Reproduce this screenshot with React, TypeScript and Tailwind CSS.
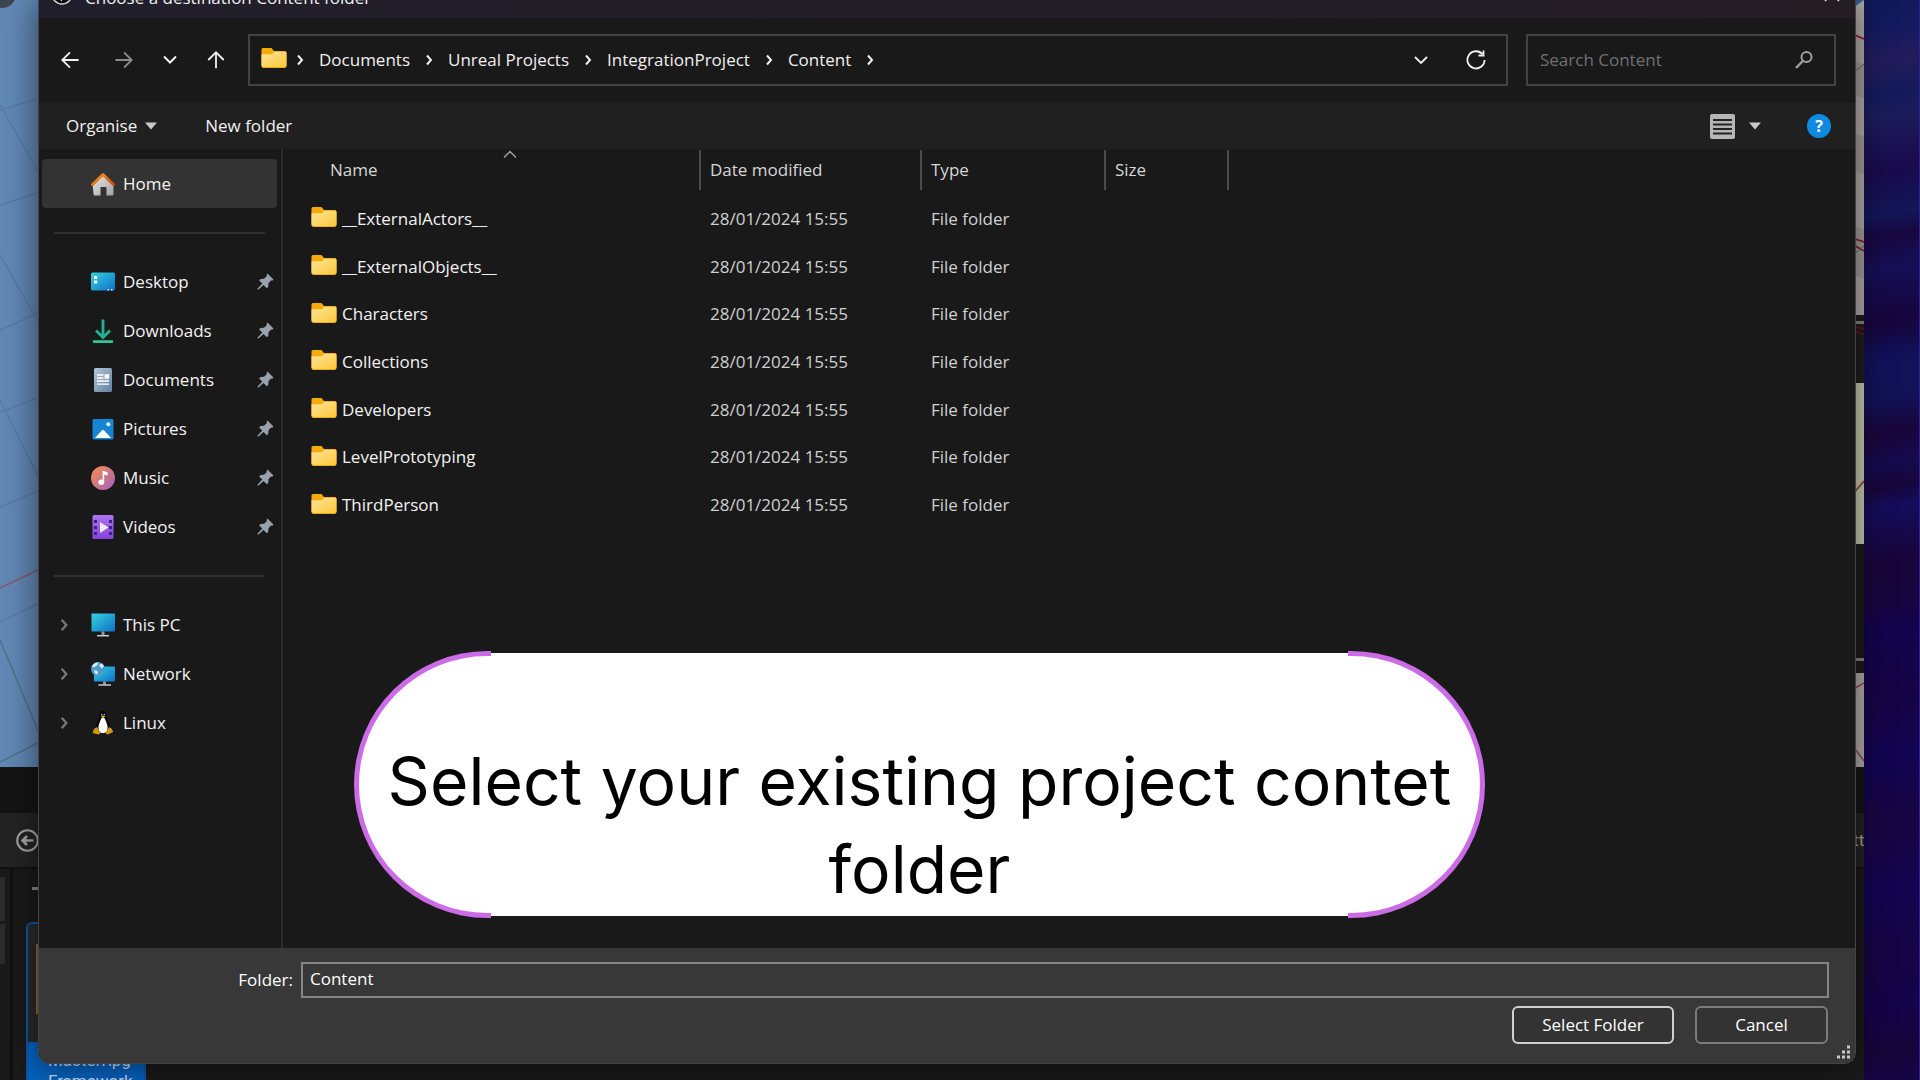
import type { ReactNode } from "react";

const folders = [
  "__ExternalActors__",
  "__ExternalObjects__",
  "Characters",
  "Collections",
  "Developers",
  "LevelPrototyping",
  "ThirdPerson",
];

const crumbs = ["Documents", "Unreal Projects", "IntegrationProject", "Content"];

function FolderIcon() {
  return (
    <svg className="h-5 w-[26px] shrink-0" viewBox="0 0 26 20" aria-hidden="true">
      <defs>
        <linearGradient id="folderFace" x1="0" y1="0" x2="1" y2="1">
          <stop offset="0" stopColor="#ffe69a" />
          <stop offset="1" stopColor="#fcc63a" />
        </linearGradient>
      </defs>
      <path d="M0.5 1.5a1.5 1.5 0 0 1 1.5-1.5h8.5l2.5 3h11a1.5 1.5 0 0 1 1.5 1.5v13.500a2 2 0 0 1-2 2h-21a2 2 0 0 1-2-2z" fill="#f3ac0c" />
      <path d="M0.500 6.200h10.500l2.500-2.400h10.500a1.500 1.500 0 0 1 1.500 1.500v12a1.800 1.800 0 0 1-1.800 1.800h-21.400a1.800 1.800 0 0 1-1.800-1.800z" fill="url(#folderFace)" />
    </svg>
  );
}

function HomeIcon() {
  return (
    <svg className="size-6" viewBox="0 0 24 24" aria-hidden="true">
      <defs>
        <linearGradient id="homeWall" x1="0" y1="0" x2="1" y2="1">
          <stop offset="0" stopColor="#e8e8e8" />
          <stop offset="1" stopColor="#a2a2a2" />
        </linearGradient>
        <linearGradient id="homeRoof" x1="0" y1="0" x2="1" y2="1">
          <stop offset="0" stopColor="#f59a1b" />
          <stop offset="1" stopColor="#d04a0c" />
        </linearGradient>
      </defs>
      <path d="M1.500 11l10.500-8.500 10.500 8.500v11a1.500 1.500 0 0 1-1.500 1.500h-5.500v-7.500a1 1 0 0 0-1-1h-4a1 1 0 0 0-1 1v7.500h-5.500a1.500 1.500 0 0 1-1.500-1.500z" fill="url(#homeWall)" />
      <path d="M1.500 12.500l10.500-10 10.500 10" fill="none" stroke="url(#homeRoof)" strokeWidth="3" strokeLinecap="round" strokeLinejoin="round" />
    </svg>
  );
}

function ScreenGradient() {
  return (
    <defs>
      <linearGradient id="screen" x1="0" y1="0" x2="1" y2="1">
        <stop offset="0" stopColor="#35d3df" />
        <stop offset="1" stopColor="#0f6fc8" />
      </linearGradient>
    </defs>
  );
}

function DesktopIcon() {
  return (
    <svg className="size-6" viewBox="0 0 24 24" aria-hidden="true">
      <ScreenGradient />
      <rect x="0" y="2.500" width="24" height="18" rx="1.500" fill="url(#screen)" />
      <path d="M3 6h3.200v3H3zM3 10.500h3.200v3H3z" fill="#fff" />
      <path d="M16.500 19h1.500v1.500h-1.500zM20 19h1.500v1.500h-1.500z" fill="#c9e8fb" />
    </svg>
  );
}

function DownloadsIcon() {
  return (
    <svg className="size-6" viewBox="0 0 24 24" aria-hidden="true">
      <path d="M12 0.500v17M5 11.500l7 7 7-7" fill="none" stroke="#1fb292" strokeWidth="2.800" />
      <path d="M3 22.600h18" stroke="#2fc896" strokeWidth="2.600" strokeLinecap="round" />
    </svg>
  );
}

function DocumentsIcon() {
  return (
    <svg className="size-6" viewBox="0 0 24 24" aria-hidden="true">
      <defs>
        <linearGradient id="page" x1="0" y1="0" x2="1" y2="1">
          <stop offset="0" stopColor="#b3c6d8" />
          <stop offset="1" stopColor="#61809f" />
        </linearGradient>
      </defs>
      <rect x="3" y="0" width="18" height="24" rx="1.500" fill="url(#page)" />
      <path d="M6 7h6.500M6 10h6.500M6 13h12M6 16.200h12" stroke="#fff" strokeWidth="1.300" />
      <rect x="13.600" y="6.200" width="4.600" height="4.600" fill="#fff" />
    </svg>
  );
}

function PicturesIcon() {
  return (
    <svg className="size-6" viewBox="0 0 24 24" aria-hidden="true">
      <rect x="1.500" y="2" width="21" height="20.500" rx="1.500" fill="#1585d4" />
      <path d="M4 21l6.800-7.600a1.600 1.600 0 0 1 2.400 0l6.800 7.600z" fill="#fff" />
      <circle cx="17.300" cy="7.300" r="2" fill="#e3f3ff" />
    </svg>
  );
}

function MusicIcon() {
  return (
    <svg className="size-6" viewBox="0 0 24 24" aria-hidden="true">
      <defs>
        <linearGradient id="disc" x1="0" y1="0" x2="1" y2="1">
          <stop offset="0.100" stopColor="#ee8a55" />
          <stop offset="1" stopColor="#a65fc0" />
        </linearGradient>
      </defs>
      <circle cx="12" cy="12" r="12" fill="url(#disc)" />
      <ellipse cx="10.300" cy="16.200" rx="2.900" ry="2.600" fill="#fff" />
      <path d="M11.600 4.800l5 1.400v3.200l-3.400-.9v7.700h-1.600z" fill="#fff" />
    </svg>
  );
}

function VideosIcon() {
  return (
    <svg className="size-6" viewBox="0 0 24 24" aria-hidden="true">
      <defs>
        <linearGradient id="film" x1="0" y1="0" x2="0" y2="1">
          <stop offset="0" stopColor="#ad73f2" />
          <stop offset="1" stopColor="#8443dd" />
        </linearGradient>
      </defs>
      <rect x="1.500" y="0" width="21" height="24" rx="1.500" fill="url(#film)" />
      <path d="M3 5h3v3H3zM3 11h3v3H3zM3 17h3v3H3zM18 5h3v3h-3zM18 11h3v3h-3zM18 17h3v3h-3z" fill="#3d2375" />
      <path d="M9 7l8.500 5.500-8.500 5.500z" fill="#f1e8fd" />
    </svg>
  );
}

function ThisPcIcon() {
  return (
    <svg className="size-6" viewBox="0 0 24 24" aria-hidden="true">
      <ScreenGradient />
      <rect x="0.500" y="0.500" width="23.500" height="18" rx="0.800" fill="url(#screen)" />
      <path d="M10.500 18.500h3v3.500h-3z" fill="#8d9aa5" />
      <path d="M6 22.700h12" stroke="#c7ced4" strokeWidth="1.500" />
    </svg>
  );
}

function NetworkIcon() {
  return (
    <svg className="size-6" viewBox="0 0 24 24" aria-hidden="true">
      <ScreenGradient />
      <rect x="3" y="4.500" width="21" height="15" rx="0.800" fill="url(#screen)" />
      <path d="M12 19.500h3v3h-3z" fill="#8d9aa5" />
      <path d="M7.500 23h12.500" stroke="#c7ced4" strokeWidth="1.500" />
      <circle cx="7" cy="7" r="7" fill="#4d9cc8" />
      <path d="M1 4.500c1.500-3 4-4.300 6.500-4l-1.500 3-3.500 2zM8 3l3-1.500 2 3-2.500 2zM3 8l3.500 1 .5 3.500-3-1z" fill="#d7edf8" />
    </svg>
  );
}

function LinuxIcon() {
  return (
    <svg className="size-6" viewBox="0 0 24 24" aria-hidden="true">
      <path d="M12 0c-2.700 0-3.800 1.900-3.700 4.500.1 2.700-.8 4-2.300 7-1.200 2.500-1.500 5-1 8.500h14c.5-3.500.2-6-1-8.500-1.500-3-2.400-4.300-2.300-7C15.800 1.900 14.700 0 12 0z" fill="#050505" />
      <path d="M12 6.500c-1.500 0-2 1.500-3 4-1.300 3-2 5.500-1.300 8.500.8 2.500 2.300 3 4.300 3s3.500-.5 4.300-3c.700-3 0-5.500-1.300-8.500-1-2.500-1.500-4-3-4z" fill="#fff" />
      <path d="M9.800 5.500l2.200-1.300 2.200 1.300-2.200 2z" fill="#e0a51c" />
      <path d="M10.300 2.800h1v1.500h-1zM12.800 2.800h1v1.500h-1z" fill="#ddd" />
      <path d="M3.500 17.500l2.500-1.500 3 5.500c.3 1.500-1 2.200-2.500 1.800l-4-1c-1-.3-.8-1.300-.3-2.300zM20.500 17.500l-2.500-1.500-3 5.500c-.3 1.500 1 2.200 2.500 1.800l4-2c1-.6.600-1.300-.3-2.300z" fill="#cf9a12" />
    </svg>
  );
}

function PinIcon() {
  return (
    <svg className="size-[17px]" viewBox="0 0 17 17" aria-hidden="true">
      <path d="M10.500 0.500l6 6-1.300 1.200-1.200-.1-2.500 2.700-.2 3.500-1.500 1.400-3.300-3.300-5 4.600-.9-.1v-.8l4.700-5-3.200-3.200 1.400-1.500 3.500-.1 2.700-2.600-.1-1.300z" fill="#98a2aa" />
    </svg>
  );
}

function Chevron({ className }: { className: string }) {
  return (
    <svg className={className} viewBox="0 0 12 12" fill="none" stroke="currentColor" strokeWidth="2" aria-hidden="true">
      <path d="M4 1.500l4 4.500-4 4.500" />
    </svg>
  );
}

function Triangle() {
  return (
    <svg className="h-2 w-3" viewBox="0 0 12 8" aria-hidden="true">
      <path d="M0 0.500h12l-6 7z" fill="#c9c9c9" />
    </svg>
  );
}

function SideItem({ icon, label, pinned, expandable, active }: { icon: ReactNode; label: string; pinned?: boolean; expandable?: boolean; active?: boolean }) {
  return (
    <li className={active ? "rounded-sm bg-[#333333]" : ""}>
      <button type="button" className="flex h-[49px] w-full items-center pl-[15px] text-left text-[#f2f2f2]">
        <span className="flex w-[34px] text-[#777777]">{expandable && <Chevron className="size-[14px]" />}</span>
        {icon}
        <span className="flex-1 pl-2">{label}</span>
        {pinned && (
          <span className="mr-[3px]">
            <PinIcon />
          </span>
        )}
      </button>
    </li>
  );
}

function SideRule() {
  return (
    <li className="flex h-[49px] items-center pr-3 pl-3" role="separator">
      <span className="h-0.5 w-full bg-[#303030]" />
    </li>
  );
}

function Sidebar() {
  return (
    <nav className="w-[244px] shrink-0 border-r-2 border-[#2b2b2b] pt-2.5 pr-1 pl-[3px]" aria-label="Places">
      <ul>
        <SideItem active icon={<HomeIcon />} label="Home" />
        <SideRule />
        <SideItem pinned icon={<DesktopIcon />} label="Desktop" />
        <SideItem pinned icon={<DownloadsIcon />} label="Downloads" />
        <SideItem pinned icon={<DocumentsIcon />} label="Documents" />
        <SideItem pinned icon={<PicturesIcon />} label="Pictures" />
        <SideItem pinned icon={<MusicIcon />} label="Music" />
        <SideItem pinned icon={<VideosIcon />} label="Videos" />
        <SideRule />
        <SideItem expandable icon={<ThisPcIcon />} label="This PC" />
        <SideItem expandable icon={<NetworkIcon />} label="Network" />
        <SideItem expandable icon={<LinuxIcon />} label="Linux" />
      </ul>
    </nav>
  );
}

function FileTable() {
  return (
    <div className="min-w-0 flex-1">
      <table className="h-[380px] w-[946px] table-fixed border-collapse text-left">
        <colgroup>
          <col className="w-[418px]" />
          <col className="w-[221px]" />
          <col className="w-[184px]" />
          <col className="w-[123px]" />
        </colgroup>
        <thead>
          <tr className="h-[46px] align-top text-[#d6d6d6]">
            <th className="p-0 font-normal">
              <div className="relative mt-px flex h-10 items-center border-r-2 border-[#4c4c4c] pl-[47px]">
                Name
                <svg className="absolute top-0 left-[220px] h-2 w-3.5" viewBox="0 0 14 8" fill="none" stroke="#a0a0a0" strokeWidth="1.500" aria-hidden="true">
                  <path d="M1 7.500l6-6 6 6" />
                </svg>
              </div>
            </th>
            {["Date modified", "Type", "Size"].map((h) => (
              <th key={h} className="p-0 font-normal">
                <div className="mt-px flex h-10 items-center border-r-2 border-[#4c4c4c] pl-[9px]">{h}</div>
              </th>
            ))}
          </tr>
        </thead>
        <tbody>
          {folders.map((name) => (
            <tr key={name}>
              <td className="p-0 pl-7">
                <span className="flex items-center gap-[5px] text-[#f2f2f2]">
                  <span className="pb-[3px]">
                    <FolderIcon />
                  </span>
                  {name}
                </span>
              </td>
              <td className="p-0 pl-[9px] text-[#d0d0d0]">28/01/2024 15:55</td>
              <td className="p-0 pl-[9px] text-[#d0d0d0]">File folder</td>
              <td className="p-0" />
            </tr>
          ))}
        </tbody>
      </table>
    </div>
  );
}

function TitleBar() {
  return (
    <div className="-mt-[30px] flex h-12 shrink-0 items-center bg-gradient-to-r from-[#211f2b] to-[#241d24] pr-[15px] pl-3 text-[#f0f0f0]">
      <svg className="size-[22px]" viewBox="0 0 22 22" aria-hidden="true">
        <circle cx="11" cy="11" r="10" fill="#050505" stroke="#d5d5d5" strokeWidth="1.500" />
        <path d="M7 5v9l3 2.500V6M10 14l4 2 2-3V6" fill="none" stroke="#fff" strokeWidth="1.800" />
      </svg>
      <h1 className="flex-1 pt-2 pl-3">Choose a destination Content folder</h1>
      <button type="button" aria-label="Close">
        <svg className="size-4" viewBox="0 0 16 16" stroke="#e5e5e5" strokeWidth="1.500" aria-hidden="true">
          <path d="M1 1l14 14M15 1L1 15" />
        </svg>
      </button>
    </div>
  );
}

function AddressRow() {
  const line = "size-5 fill-none stroke-current stroke-2";
  return (
    <div className="flex h-[85px] shrink-0 items-center pr-[19px] pb-0.5 pl-[21px] text-[#f0f0f0]">
      <div className="mr-[22px] flex gap-[26px]">
        <button type="button" aria-label="Back">
          <svg className={line} viewBox="-1 -1 22 22">
            <path d="M19.500 10H1.500M10 1.500L1.500 10l8.500 8.500" />
          </svg>
        </button>
        <button type="button" aria-label="Forward" className="ml-2 text-[#8c8c8c]">
          <svg className={line} viewBox="-1 -1 22 22">
            <path d="M0.500 10h18M10 1.500l8.500 8.500-8.500 8.500" />
          </svg>
        </button>
        <button type="button" aria-label="Recent locations">
          <svg className={line} viewBox="0 0 20 20">
            <path d="M4 6.500l6 6 6-6" />
          </svg>
        </button>
        <button type="button" aria-label="Up">
          <svg className={line} viewBox="-1 -1 22 22">
            <path d="M10 19V1.500M1.500 10L10 1.500l8.500 8.500" />
          </svg>
        </button>
      </div>
      <div className="flex h-[52px] flex-1 items-center border-2 border-[#424242] pr-5 pl-[11px]">
        <span className="mr-[7px] -mt-1">
          <FolderIcon />
        </span>
        <Chevron className="size-3" />
        {crumbs.map((c) => (
          <span key={c} className="flex items-center">
            <button type="button" className="px-[13px]">
              {c}
            </button>
            <Chevron className="size-3" />
          </span>
        ))}
        <button type="button" aria-label="Previous locations" className="mr-[38px] ml-auto">
          <svg className="h-3 w-3.5 fill-none stroke-current stroke-[1.800]" viewBox="0 0 14 12">
            <path d="M1 3l6 6 6-6" />
          </svg>
        </button>
        <button type="button" aria-label="Refresh">
          <svg className="size-5 fill-none stroke-current stroke-[1.800]" viewBox="0 0 20 20">
            <path d="M16.500 4.200A8.600 8.600 0 1 0 18.600 10" />
            <path d="M17.500 0.500v5h-5" />
          </svg>
        </button>
      </div>
      <label className="ml-[18px] flex h-[52px] w-[310px] items-center border-2 border-[#424242] pr-[20px] pl-3">
        <span className="sr-only">Search Content</span>
        <input type="text" placeholder="Search Content" className="min-w-0 flex-1 bg-transparent outline-none placeholder:text-[#707070]" />
        <svg className="size-5 fill-none stroke-[#a0a0a0] stroke-2" viewBox="0 0 20 20" aria-hidden="true">
          <circle cx="12.500" cy="7" r="5" />
          <path d="M8.700 11l-6.700 7" strokeWidth="2.500" />
        </svg>
      </label>
    </div>
  );
}

function Toolbar() {
  return (
    <div className="flex h-[46px] shrink-0 items-center bg-[#202020] pr-6 pl-[27px] text-[#f0f0f0]">
      <button type="button" className="mr-12 flex items-center gap-2">
        Organise <Triangle />
      </button>
      <button type="button">New folder</button>
      <button type="button" aria-label="Change your view" className="mr-[46px] ml-auto flex items-center gap-[14px]">
        <svg className="size-[25px]" viewBox="0 0 25 25" aria-hidden="true">
          <rect x="0" y="0" width="25" height="25" rx="2" fill="#b5b5b5" />
          <path d="M3 6h19M3 10.500h19M3 15h19M3 19.500h19" stroke="#222" strokeWidth="1.800" />
        </svg>
        <Triangle />
      </button>
      <button type="button" aria-label="Help" className="flex size-6 items-center justify-center rounded-full bg-[#0e8be0] text-base font-bold text-white">
        ?
      </button>
    </div>
  );
}

function Footer() {
  return (
    <div className="shrink-0 bg-[#383838] pt-3.5 pr-[26px] pb-[19px] text-white">
      <div className="flex items-center">
        <label htmlFor="folder" className="w-[262px] pr-2 text-right">
          Folder:
        </label>
        <input id="folder" type="text" defaultValue="Content" className="h-9 min-w-0 flex-1 border-2 border-[#858585] bg-[#383838] px-[7px] pb-1 outline-none" />
      </div>
      <div className="mt-2 mr-px flex justify-end gap-[21px]">
        <button type="button" className="h-[38px] w-[162px] rounded-md border-2 border-[#d0d0d0] bg-[#333333] pb-0.5 leading-none">
          Select Folder
        </button>
        <button type="button" className="h-[38px] w-[133px] rounded-md border-2 border-[#7b7b7b] bg-[#333333] pb-0.5 leading-none">
          Cancel
        </button>
      </div>
      <svg className="absolute right-1 bottom-1 size-3.5" viewBox="0 0 14 14" fill="#c8c8c8" aria-hidden="true">
        <path d="M10 0.500h3v3h-3zM10 5.500h3v3h-3zM10 10.500h3v3h-3zM5 5.500h3v3H5zM5 10.500h3v3H5zM0 10.500h3v3H0z" />
      </svg>
    </div>
  );
}

/* 3D viewport and asset browser that show around the dialog's edges */
function Editor() {
  return (
    <div className="flex min-w-0 flex-1 flex-col overflow-hidden bg-[#1a1a1a]">
      <div className="flex h-[767px] shrink-0 justify-between bg-[#1a1a1a]">
        <svg className="h-full w-40" viewBox="0 0 160 767" aria-hidden="true">
          <rect width="160" height="767" fill="#6289b6" />
          <g stroke="#53759c" strokeWidth="1.500" opacity="0.600">
            <path d="M0 105L40 175M0 255L40 325M0 330L40 312M0 412L40 397M0 507L40 490M0 205L40 192M0 110L40 98M0 400L40 480M0 622L40 603" />
          </g>
          <path d="M0 640L40 735M0 762L40 742" stroke="#4d7487" strokeWidth="1.500" />
          <path d="M0 588L40 569" stroke="#8a5a6c" strokeWidth="1.500" />
          <circle cx="2" cy="-6" r="14" fill="#3d4650" />
        </svg>
        <svg className="h-full w-5" viewBox="0 0 20 767" aria-hidden="true">
          <rect width="20" height="767" fill="#b5aeab" />
          <path d="M0 58l20 6v34l-20-6zM0 132l20 4v38l-20-5zM0 222l20 7v50l-20-7z" fill="#a6a09e" />
          <path d="M0 0h20l-11 8z" fill="#3a6298" />
          <path d="M8 34l12 5M8 238l12 4M8 244l12 7" stroke="#8e1f26" strokeWidth="1.800" />
          <path d="M8 74l12-10M8 256l12-10" stroke="#6e6a69" />
          <path d="M0 315h20v69H0z" fill="#1f1d1d" />
          <path d="M0 321h20v3H0z" fill="#8b8685" />
          <path d="M8 326l12 3M8 331l12 3" stroke="#7a1519" strokeWidth="1.500" />
          <path d="M0 383h20v161H0z" fill="#c8cdb0" />
          <path d="M8 495l12-14" stroke="#8d4a46" strokeWidth="1.800" />
          <path d="M0 544h20v114H0z" fill="#1c1b1b" />
          <path d="M0 658h20v3H0z" fill="#8b8685" />
          <path d="M0 661h20v12H0z" fill="#1c1b1b" />
          <path d="M8 690l12-7M8 745l12 16" stroke="#8e4a4e" strokeWidth="1.500" />
        </svg>
      </div>
      <div className="h-[46px] shrink-0 bg-[#151515]" />
      <div className="flex h-[56px] shrink-0 items-center justify-between border-b-2 border-[#121212] bg-[#242424] pl-4 font-[Roboto,sans-serif] text-[#a5a5a5]">
        <svg className="size-[23px]" viewBox="0 0 23 23" fill="none" stroke="#a8a8a8" strokeWidth="2" aria-hidden="true">
          <circle cx="11.500" cy="11.500" r="10.300" />
          <path d="M17.500 11.500H7M11 7l-4.500 4.500L11 16" strokeWidth="2.500" />
        </svg>
        <span className="w-[30px] overflow-hidden">Settings</span>
      </div>
      <div className="flex flex-1">
        <div className="w-[5px] pt-2">
          <div className="h-11 bg-[#2c2c2c]" />
          <div className="mt-[3px] h-10 bg-[#2c2c2c]" />
        </div>
        <div className="mx-[5px] w-[3px] bg-[#111111]" />
        <div className="pt-[18px] pl-2">
          <div className="ml-[6px] h-[3px] w-8 bg-[#8a8a8a]" />
          <div className="mt-8 w-[120px] rounded-t-md border-2 border-[#0d55a5] bg-[#2a2a2a]">
            <div className="h-[118px] px-2 pt-5">
              <div className="h-[70px] bg-[#8a6a3e]" />
            </div>
            <div className="bg-[#0561bd] pt-2 pl-5 font-[Roboto,sans-serif] leading-[21px] text-[#c9dbf0]">
              MasterRpg
              <br />
              Framework
            </div>
          </div>
        </div>
      </div>
    </div>
  );
}

function Callout() {
  return (
    <div className="absolute top-[651px] right-[435px] left-[354px] flex h-[267px] font-[Inter,sans-serif]">
      <div className="w-[137px] rounded-l-full border-[5px] border-r-0 border-[#cb6ce6] bg-white" />
      <div className="my-0.5 flex-1 bg-white" />
      <div className="w-[137px] rounded-r-full border-[5px] border-l-0 border-[#cb6ce6] bg-white" />
      <p className="absolute inset-x-0 top-[86px] text-center text-[66px] leading-[88px] whitespace-nowrap text-black">
        Select your existing project contet
        <br />
        folder
      </p>
    </div>
  );
}

export default function App() {
  return (
    <main className="relative flex h-screen overflow-hidden bg-[#151515] font-['Open_Sans',sans-serif] text-[17px] leading-6">
      <Editor />
      <div className="w-14 shrink-0 border-r border-[#2f1f96] bg-[linear-gradient(170deg,#10195a_0%,#141a5e_3%,#241c5c_6%,#131a5a_9%,#1d1c5b_11%,#190a4c_16%,#121657_20%,#180840_22%,#150f55_25%,#17053c_30%,#111158_33%,#121257_37%,#19053a_40%,#150b4e_43%,#170639_45%,#150d5c_47%,#180538_52%,#16053f_56%,#12034c_58%,#150444_65%,#120452_70%,#170640_76%,#130450_82%,#150544_88%,#130348_93%,#160538_97%,#130446_100%)]" />
      <section
        role="dialog"
        aria-label="Choose a destination Content folder"
        className="absolute inset-x-0 top-0 bottom-4 mr-[64px] ml-[38px] flex flex-col overflow-hidden rounded-b-xl border border-t-0 border-[#444444] bg-[#191919] shadow-[0_0_36px_rgba(0,0,0,0.550)]"
      >
        <TitleBar />
        <AddressRow />
        <Toolbar />
        <div className="flex min-h-0 flex-1">
          <Sidebar />
          <FileTable />
        </div>
        <Footer />
      </section>
      <Callout />
    </main>
  );
}
